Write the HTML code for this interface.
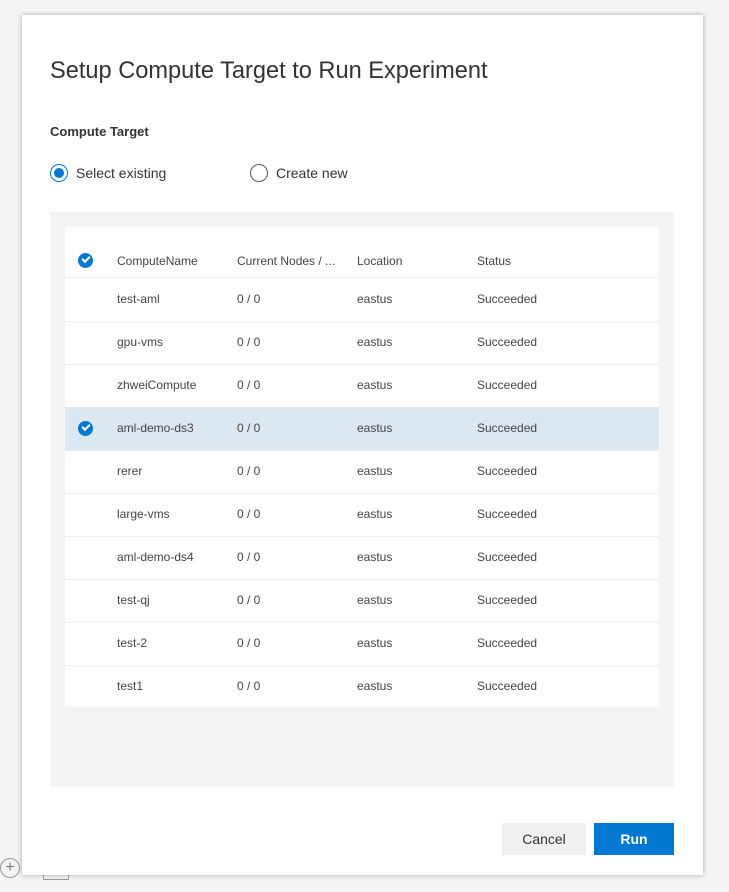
<!DOCTYPE html>
<html><head><style>
body{margin:0;width:729px;height:892px;background:#f4f4f4;font-family:"Liberation Sans",sans-serif;position:relative;overflow:hidden;color:#333}
.dlg{position:absolute;left:22px;top:15px;width:681px;height:860px;background:#fff;box-shadow:0 0 5px rgba(0,0,0,.3)}
.abs{position:absolute}
h1{position:absolute;left:28px;top:43px;margin:0;font-weight:normal;font-size:23.6px;color:#333}
.lbl{left:28px;top:109px;font-size:13px;font-weight:bold;color:#333}
.radio{width:18px;height:18px;border:1px solid #555;border-radius:50%;box-sizing:border-box}
.panel{left:28px;top:197px;width:624px;height:575px;background:#f4f4f4}
.tbl{left:15px;top:15px;width:594px;height:480px;background:#fff}
.row{position:absolute;left:0;width:594px;height:43px;border-bottom:1px solid #eee;font-size:12px;color:#444}
.row span{position:absolute;top:14px}
.chk{position:absolute;left:13px;top:14px;width:15px;height:15px;border-radius:50%;background:#0078d4}
.chk:after{content:"";position:absolute;left:4px;top:3px;width:6px;height:3px;border-left:2px solid #fff;border-bottom:2px solid #fff;transform:rotate(-45deg)}
.btn{top:808px;height:32px;font-size:14px;text-align:center;line-height:32px}
</style></head><body>
<div class="abs" style="left:0;top:858px;width:20px;height:20px;border:1.5px solid #999;border-radius:50%;box-sizing:border-box;text-align:center;line-height:17px;color:#777;font-size:16px">+</div>
<div class="abs" style="left:43px;top:866px;width:26px;height:14px;border:1.5px solid #999;box-sizing:border-box"></div>
<div class="dlg">
<h1>Setup Compute Target to Run Experiment</h1>
<div class="abs lbl">Compute Target</div>
<div class="abs radio" style="left:28px;top:149px;border-color:#0078d4;"><div style="position:absolute;left:3px;top:3px;width:10px;height:10px;border-radius:50%;background:#0078d4"></div></div>
<div class="abs" style="left:54px;top:150px;font-size:14px">Select existing</div>
<div class="abs radio" style="left:228px;top:149px"></div>
<div class="abs" style="left:254px;top:150px;font-size:14px">Create new</div>
<div class="abs panel"><div class="abs tbl">
<div class="row" style="top:17px;height:33px"><div class="chk" style="top:9px"></div><span style="left:52px;top:10px">ComputeName</span><span style="left:172px;top:10px">Current Nodes / ...</span><span style="left:292px;top:10px">Location</span><span style="left:412px;top:10px">Status</span></div>
<div class="row" style="top:51px"><span style="left:52px">test-aml</span><span style="left:172px">0 / 0</span><span style="left:292px">eastus</span><span style="left:412px">Succeeded</span></div>
<div class="row" style="top:94px"><span style="left:52px">gpu-vms</span><span style="left:172px">0 / 0</span><span style="left:292px">eastus</span><span style="left:412px">Succeeded</span></div>
<div class="row" style="top:137px"><span style="left:52px">zhweiCompute</span><span style="left:172px">0 / 0</span><span style="left:292px">eastus</span><span style="left:412px">Succeeded</span></div>
<div class="row" style="top:180px;background:#dbe8f2"><div class="chk"></div><span style="left:52px">aml-demo-ds3</span><span style="left:172px">0 / 0</span><span style="left:292px">eastus</span><span style="left:412px">Succeeded</span></div>
<div class="row" style="top:223px"><span style="left:52px">rerer</span><span style="left:172px">0 / 0</span><span style="left:292px">eastus</span><span style="left:412px">Succeeded</span></div>
<div class="row" style="top:266px"><span style="left:52px">large-vms</span><span style="left:172px">0 / 0</span><span style="left:292px">eastus</span><span style="left:412px">Succeeded</span></div>
<div class="row" style="top:309px"><span style="left:52px">aml-demo-ds4</span><span style="left:172px">0 / 0</span><span style="left:292px">eastus</span><span style="left:412px">Succeeded</span></div>
<div class="row" style="top:352px"><span style="left:52px">test-qj</span><span style="left:172px">0 / 0</span><span style="left:292px">eastus</span><span style="left:412px">Succeeded</span></div>
<div class="row" style="top:395px"><span style="left:52px">test-2</span><span style="left:172px">0 / 0</span><span style="left:292px">eastus</span><span style="left:412px">Succeeded</span></div>
<div class="row" style="top:438px;border-bottom:none"><span style="left:52px">test1</span><span style="left:172px">0 / 0</span><span style="left:292px">eastus</span><span style="left:412px">Succeeded</span></div>
</div></div>
<div class="abs btn" style="left:480px;width:84px;background:#f0f0f0;color:#333">Cancel</div>
<div class="abs btn" style="left:572px;width:80px;background:#0078d4;color:#fff;font-weight:bold">Run</div>
</div>
</body></html>
